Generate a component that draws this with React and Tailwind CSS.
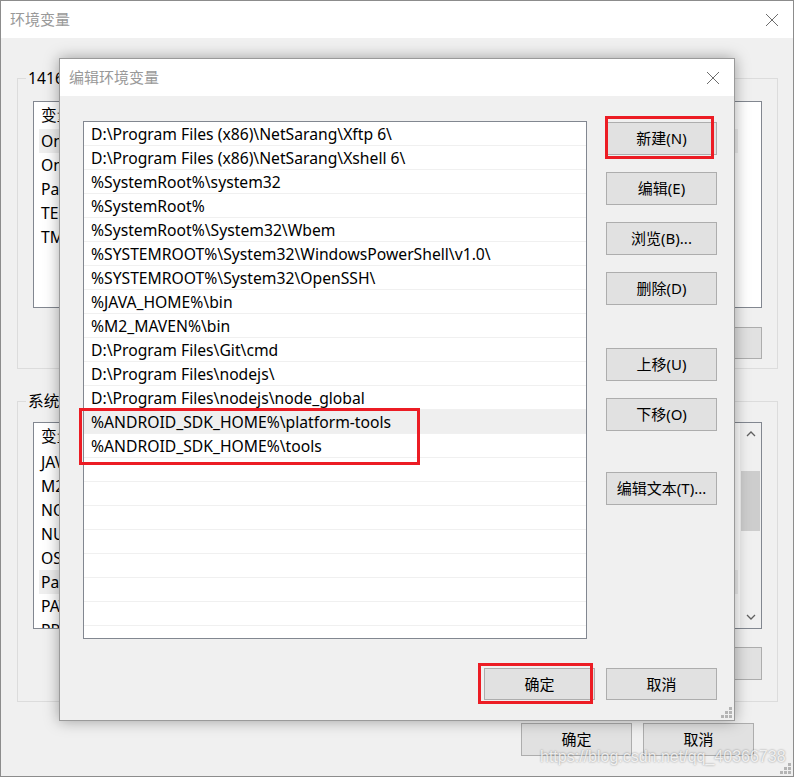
import React from 'react'

const font = { fontFamily: '"Noto Sans", "Noto Sans CJK SC", sans-serif' }

const pathItems = [
  'D:\\Program Files (x86)\\NetSarang\\Xftp 6\\',
  'D:\\Program Files (x86)\\NetSarang\\Xshell 6\\',
  '%SystemRoot%\\system32',
  '%SystemRoot%',
  '%SystemRoot%\\System32\\Wbem',
  '%SYSTEMROOT%\\System32\\WindowsPowerShell\\v1.0\\',
  '%SYSTEMROOT%\\System32\\OpenSSH\\',
  '%JAVA_HOME%\\bin',
  '%M2_MAVEN%\\bin',
  'D:\\Program Files\\Git\\cmd',
  'D:\\Program Files\\nodejs\\',
  'D:\\Program Files\\nodejs\\node_global',
  '%ANDROID_SDK_HOME%\\platform-tools',
  '%ANDROID_SDK_HOME%\\tools',
]

const userVars = ['OneDrive', 'OneDriveConsumer', 'Path', 'TEMP', 'TMP']
const sysVars = ['JAVA_HOME', 'M2_MAVEN', 'NODE_PATH', 'NUMBER_OF_PROCESSORS', 'OS', 'Path', 'PATHEXT', 'PROCESSOR_ARCHITECTURE']

function CloseX() {
  return (
    <svg width="14" height="14" viewBox="0 0 14 14">
      <path d="M1 1 L13 13 M13 1 L1 13" stroke="#6d6d6d" strokeWidth="1" fill="none" />
    </svg>
  )
}

function Grip() {
  const dots = [[8, 0], [4, 4], [8, 4], [0, 8], [4, 8], [8, 8]]
  return (
    <svg width="11" height="11" viewBox="0 0 11 11">
      {dots.map(([x, y], i) => (
        <rect key={i} x={x} y={y} width="3" height="3" fill="#b4b4b4" />
      ))}
    </svg>
  )
}

function Btn({ children, className = '' }) {
  return (
    <div className={`flex items-center justify-center bg-[#e1e1e1] border border-[#adadad] text-[15px] text-black ${className}`}>
      {children}
    </div>
  )
}

function VarList({ items, selected, scroll }) {
  return (
    <div className="relative w-[729px] h-[207px] bg-white border border-[#828790] overflow-hidden">
      <div className="flex h-[27px] items-center text-[15.7px] pl-[7px]">
        <span className="w-[160px]">变量</span>
        <span>值</span>
      </div>
      {items.map((v, i) => (
        <div
          key={v}
          className={`flex h-[24px] items-center text-[15.7px] pl-[2px] pt-[2px] ml-[5px] w-[699px] ${i === selected ? 'bg-[#efefef]' : ''}`}
        >
          {v}
        </div>
      ))}
      {scroll && (
        <div className="absolute right-0 top-0 bottom-0 w-[21px] bg-[#f0f0f0] flex flex-col items-center">
          <div className="h-[22px] flex items-center justify-center">
            <svg width="10" height="6" viewBox="0 0 10 6"><path d="M1 5 L5 1 L9 5" stroke="#606060" strokeWidth="1.3" fill="none" /></svg>
          </div>
          <div className="mt-[26px] w-[19px] h-[60px] bg-[#cdcdcd]" />
          <div className="flex-1" />
          <div className="h-[22px] flex items-center justify-center">
            <svg width="10" height="6" viewBox="0 0 10 6"><path d="M1 1 L5 5 L9 1" stroke="#606060" strokeWidth="1.3" fill="none" /></svg>
          </div>
        </div>
      )}
    </div>
  )
}

function GroupBox({ label, children, className = '' }) {
  return (
    <div className={`relative ml-[16px] w-[761px] border border-[#dcdcdc] pl-[15px] ${className}`}>
      <span className="absolute left-[8px] -top-[12px] bg-[#f0f0f0] px-[2px] text-[15.7px] text-black">{label}</span>
      {children}
    </div>
  )
}

function EditDialog() {
  const rows = Array.from({ length: 22 }, (_, i) => pathItems[i] || '')
  return (
    <div className="absolute left-[58px] top-[57px] w-[676px] h-[663px] bg-[#f0f0f0] border border-[#9a9a9a] shadow-[0_0_14px_rgba(0,0,0,0.35)] flex flex-col">
      <div className="h-[37px] bg-white flex items-center justify-between pl-[9px] pr-[14px]">
        <span className="text-[15px] text-[#999999]">编辑环境变量</span>
        <CloseX />
      </div>
      <div className="flex pl-[23px] pt-[25px]">
        <div className="w-[504px] h-[518px] bg-white border border-[#828790] overflow-hidden">
          {rows.map((t, i) => (
            <div
              key={i}
              className={`h-[24px] flex items-center pl-[7px] pt-[2px] text-[15.7px] text-black border-b border-[#f0f0f0] ${i === 12 ? 'bg-[#efefef]' : ''}`}
            >
              {t}
            </div>
          ))}
        </div>
        <div className="ml-[19px] w-[111px] flex flex-col pt-[1px]">
          <Btn className="h-[33px]">新建(N)</Btn>
          <Btn className="h-[33px] mt-[17px]">编辑(E)</Btn>
          <Btn className="h-[33px] mt-[17px]">浏览(B)...</Btn>
          <Btn className="h-[33px] mt-[17px]">删除(D)</Btn>
          <Btn className="h-[33px] mt-[43px]">上移(U)</Btn>
          <Btn className="h-[33px] mt-[17px]">下移(O)</Btn>
          <Btn className="h-[33px] mt-[41px]">编辑文本(T)...</Btn>
        </div>
      </div>
      <div className="flex justify-end gap-[11px] pr-[17px] mt-[29px]">
        <Btn className="w-[111px] h-[32px]">确定</Btn>
        <Btn className="w-[111px] h-[32px]">取消</Btn>
      </div>
      <div className="absolute right-[2px] bottom-[2px]"><Grip /></div>
    </div>
  )
}

export default function App() {
  return (
    <div className="relative w-[794px] h-[777px] overflow-hidden bg-[#f0f0f0] border border-[#8c8c8c] text-black" style={font}>
      <div className="h-[37px] bg-white flex items-center justify-between pl-[9px] pr-[14px]">
        <span className="text-[15px] text-[#999999]">环境变量</span>
        <CloseX />
      </div>

      <GroupBox label="14167 的用户变量(U)" className="mt-[40px] h-[291px] pt-[22px]">
        <VarList items={userVars} selected={0} />
        <div className="flex justify-end gap-[11px] mt-[19px] w-[729px]">
          <Btn className="w-[110px] h-[32px]">新建(N)...</Btn>
          <Btn className="w-[110px] h-[32px]">编辑(E)...</Btn>
          <Btn className="w-[110px] h-[32px]">删除(D)</Btn>
        </div>
      </GroupBox>

      <GroupBox label="系统变量(S)" className="mt-[32px] h-[301px] pt-[20px]">
        <VarList items={sysVars} selected={5} scroll />
        <div className="flex justify-end gap-[11px] mt-[18px] w-[729px]">
          <Btn className="w-[110px] h-[33px]">新建(W)...</Btn>
          <Btn className="w-[110px] h-[33px]">编辑(I)...</Btn>
          <Btn className="w-[110px] h-[33px]">删除(L)</Btn>
        </div>
      </GroupBox>

      <div className="flex justify-end gap-[11px] pr-[39px] mt-[21px]">
        <Btn className="w-[111px] h-[33px]">确定</Btn>
        <Btn className="w-[111px] h-[33px]">取消</Btn>
      </div>

      <div className="absolute right-[2px] bottom-[2px]"><Grip /></div>

      <EditDialog />

      {/* red annotation boxes */}
      <div className="absolute left-[604px] top-[115px] w-[109px] h-[43px] border-[3px] border-[#ec1c24]" />
      <div className="absolute left-[78px] top-[407px] w-[341px] h-[57px] border-[3px] border-[#ec1c24]" />
      <div className="absolute left-[477px] top-[662px] w-[115px] h-[41px] border-[3px] border-[#ec1c24]" />

      <div
        className="absolute left-[539px] top-[746px] text-[16px] leading-[20px] text-white/80 [text-shadow:0_0_2px_rgba(0,0,0,0.45)] whitespace-nowrap"
        style={{ fontFamily: '"Liberation Sans", sans-serif' }}
      >
        https://blog.csdn.net/qq_40366738
      </div>
    </div>
  )
}
